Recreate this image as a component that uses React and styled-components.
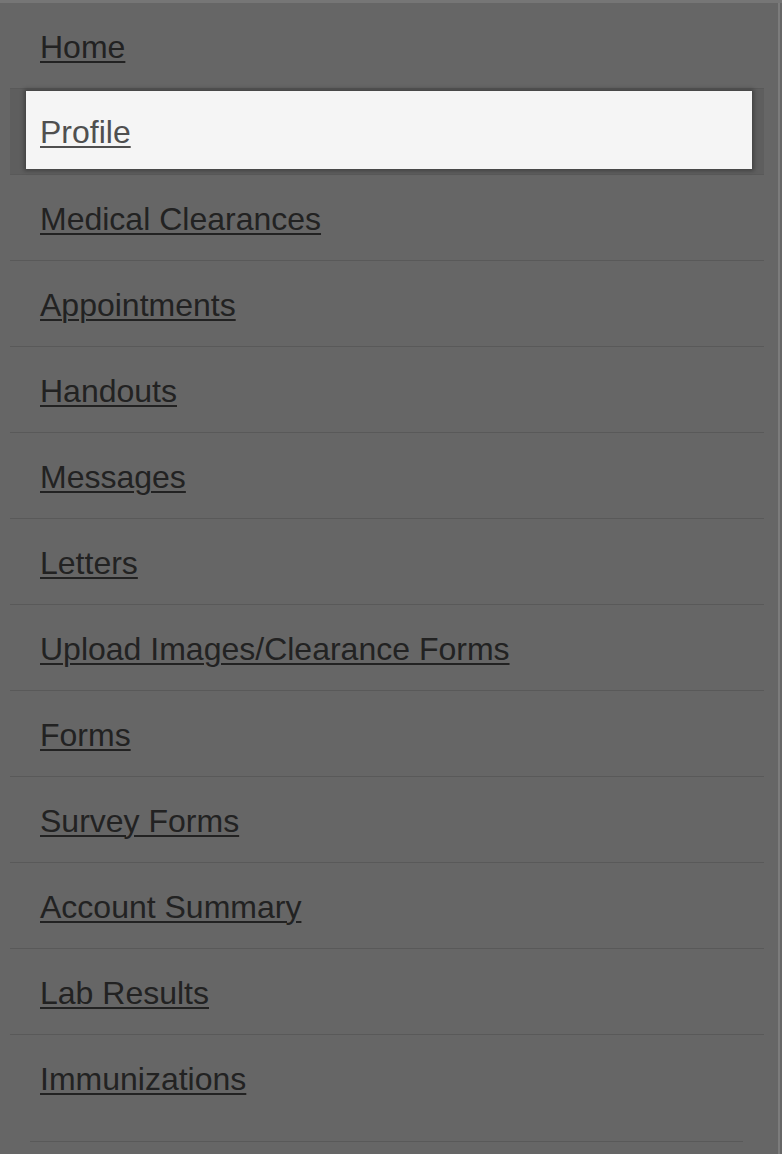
import React from "react";
import styled, { createGlobalStyle } from "styled-components";

const Global = createGlobalStyle`
  html, body { margin: 0; padding: 0; background: #666666; }
  body { font-family: "Liberation Sans", Arial, Helvetica, sans-serif; }
`;

const Panel = styled.div`
  box-sizing: border-box;
  width: 782px;
  height: 1154px;
  overflow: hidden;
  background: #666666;
  border-top: 3px solid #767676;
  display: flex;
`;

const Content = styled.div`
  flex: 1;
  display: flex;
  flex-direction: column;
`;

const Edge = styled.div`
  width: 2px;
  margin-right: 2px;
  background: #7c7c7c;
`;

const List = styled.ul`
  list-style: none;
  margin: 0 14px 0 10px;
  padding: 0;
`;

const Item = styled.li`
  box-sizing: border-box;
  height: 86px;
  border-bottom: 1px solid #595959;
  display: flex;
  align-items: stretch;
  padding: ${(p) => (p.$active ? "2px 12px 5px 16px" : "2px 0 0 30px")};
  background: ${(p) => (p.$active ? "#5e5e5e" : "transparent")};

  &:last-child {
    border-bottom: none;
  }
`;

const Box = styled.div`
  flex: 1;
  display: flex;
  align-items: center;
  padding-left: ${(p) => (p.$active ? "14px" : "0")};
  padding-top: ${(p) => (p.$active ? "4px" : "0")};
  background: ${(p) => (p.$active ? "#f5f5f5" : "transparent")};
  box-shadow: ${(p) => (p.$active ? "0 0 4px 2px rgba(0,0,0,0.3)" : "none")};
`;

const Link = styled.a`
  font-size: 32px;
  line-height: 1;
  color: ${(p) => (p.$active ? "#4f4f4f" : "#222222")};
  text-decoration: underline;
  text-decoration-thickness: 2px;
  text-underline-offset: 3px;
  cursor: pointer;
`;

const Footer = styled.hr`
  border: 0;
  height: 1px;
  background: #595959;
  margin: 20px 35px 0 30px;
`;

const items = [
  "Home",
  "Profile",
  "Medical Clearances",
  "Appointments",
  "Handouts",
  "Messages",
  "Letters",
  "Upload Images/Clearance Forms",
  "Forms",
  "Survey Forms",
  "Account Summary",
  "Lab Results",
  "Immunizations",
];

export default function App() {
  return (
    <>
      <Global />
      <Panel>
        <Content>
          <List>
            {items.map((label) => {
              const active = label === "Profile";
              return (
                <Item key={label} $active={active}>
                  <Box $active={active}>
                    <Link $active={active}>{label}</Link>
                  </Box>
                </Item>
              );
            })}
          </List>
          <Footer />
        </Content>
        <Edge />
      </Panel>
    </>
  );
}
